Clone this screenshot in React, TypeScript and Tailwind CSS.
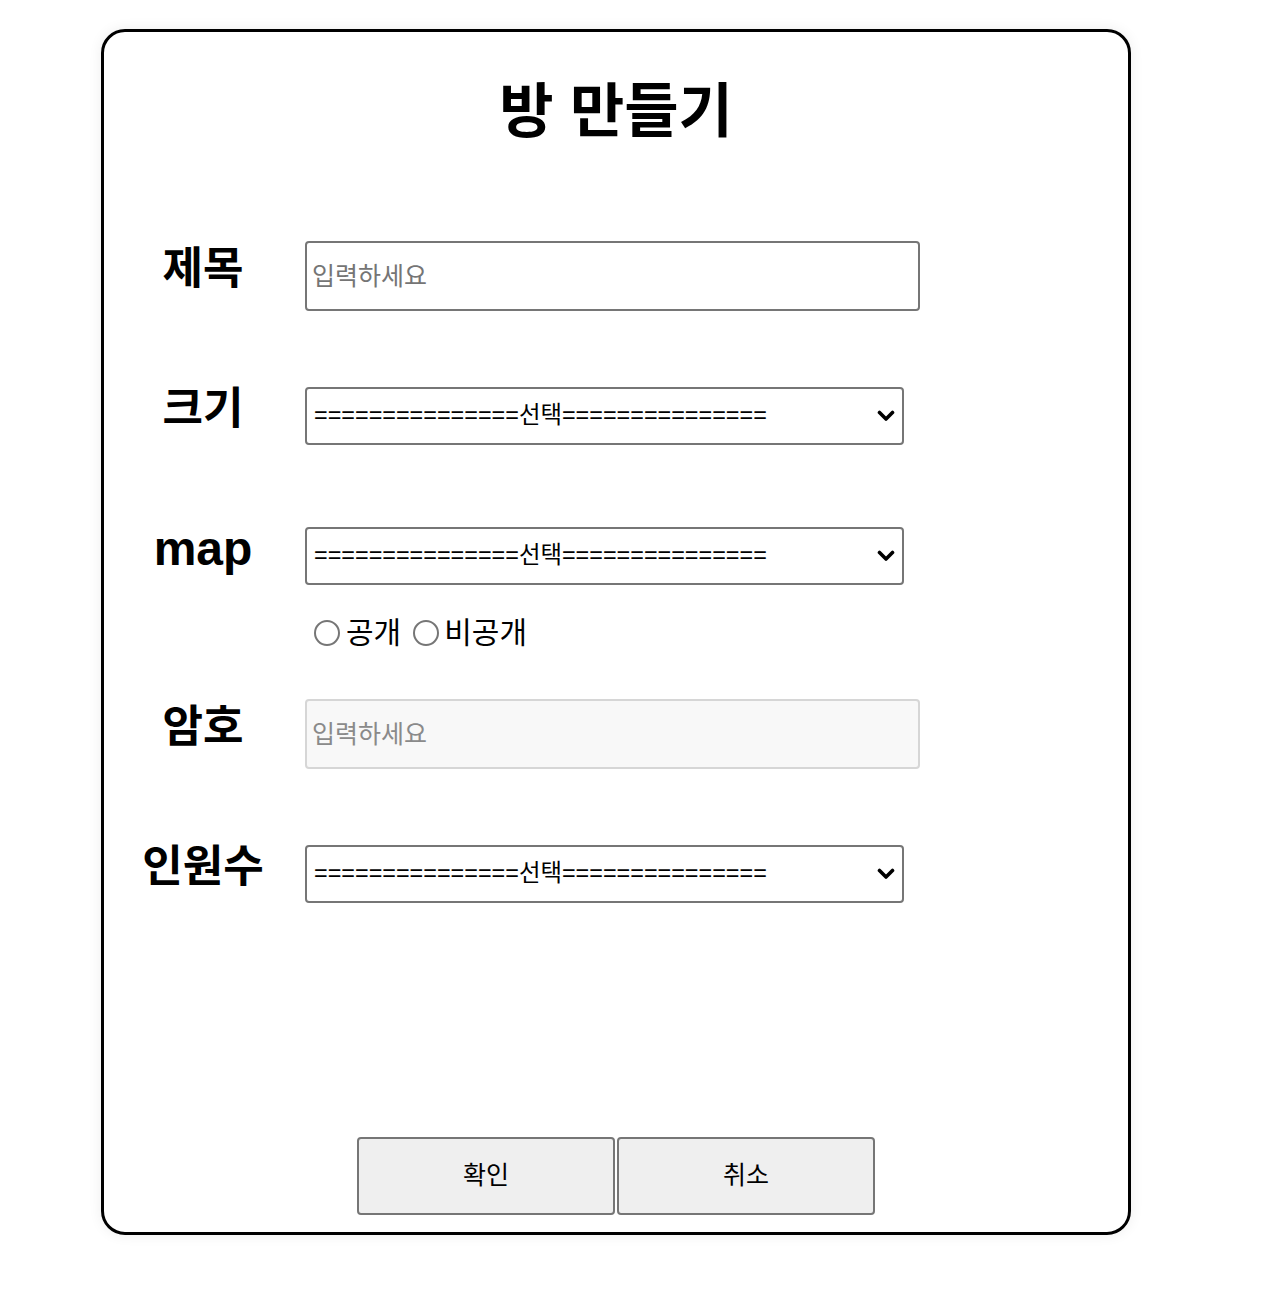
import { useState } from "react";

const font = { fontFamily: '"Liberation Sans", "Noto Sans CJK KR", sans-serif' };

const options = "===============선택===============";

function Label({ children, big }: { children: string; big?: boolean }) {
  return (
    <div
      className={
        "w-[198px] shrink-0 text-center font-bold text-black -mt-[14px] leading-none " +
        (big ? "text-[48px]" : "text-[44px]")
      }
    >
      {children}
    </div>
  );
}

function Select() {
  return (
    <div className="relative w-[599px] h-[58px]">
      <select
        className="w-full h-full appearance-none rounded-[4px] border-2 border-[#767676] bg-white pl-[7px] text-[23.4px] text-black outline-none"
        style={font}
        defaultValue=""
      >
        <option value="">{options}</option>
      </select>
      <svg
        className="pointer-events-none absolute right-[9px] top-[23px]"
        width="18"
        height="12"
        viewBox="0 0 18 12"
        fill="none"
      >
        <path d="M2.5 2.5 L9 9 L15.5 2.5" stroke="#000" strokeWidth="3.6" strokeLinecap="round" strokeLinejoin="round" />
      </svg>
    </div>
  );
}

export default function App() {
  const [open, setOpen] = useState<string>("");

  return (
    <div className="min-h-[1312px] bg-white pt-[29px] pl-[101px]" style={font}>
      <div className="w-[1030px] h-[1206px] border-[3px] border-black rounded-[24px] shadow-[0_0_14px_rgba(0,0,0,0.07)] flex flex-col">
        <h1 className="mt-[44px] text-center text-[59px] font-bold leading-[72px] text-black">방 만들기</h1>

        <div className="mt-[93px] flex items-center gap-[3px]">
          <Label>제목</Label>
          <input
            className="w-[615px] h-[70px] rounded-[4px] border-2 border-[#767676] px-[5px] text-[25px] outline-none placeholder:text-[#757575]"
            style={font}
            placeholder="입력하세요"
          />
        </div>

        <div className="mt-[76px] flex items-center gap-[3px]">
          <Label>크기</Label>
          <Select />
        </div>

        <div className="mt-[82px] flex items-center gap-[3px]">
          <Label big>map</Label>
          <Select />
        </div>

        <div className="mt-[35px] ml-[210px] flex items-center h-[26px] text-[30px] text-black">
          <label className="flex items-center">
            <input
              type="radio"
              name="open"
              checked={open === "public"}
              onChange={() => setOpen("public")}
              className="appearance-none w-[26px] h-[26px] rounded-full border-2 border-[#767676] bg-white"
            />
            <span className="ml-[6px] leading-none">공개</span>
          </label>
          <label className="ml-[12px] flex items-center">
            <input
              type="radio"
              name="open"
              checked={open === "private"}
              onChange={() => setOpen("private")}
              className="appearance-none w-[26px] h-[26px] rounded-full border-2 border-[#767676] bg-white"
            />
            <span className="ml-[5px] leading-none">비공개</span>
          </label>
        </div>

        <div className="mt-[53px] flex items-center gap-[3px]">
          <Label>암호</Label>
          <input
            disabled
            className="w-[615px] h-[70px] rounded-[4px] border-2 border-[#d6d6d6] bg-[#f8f8f8] px-[5px] text-[25px] outline-none placeholder:text-[#8a8a8a]"
            style={font}
            placeholder="입력하세요"
          />
        </div>

        <div className="mt-[76px] flex items-center gap-[3px]">
          <Label>인원수</Label>
          <Select />
        </div>

        <div className="mt-auto mb-[17px] flex justify-center gap-[2px]">
          <button className="w-[258px] h-[78px] rounded-[4px] border-2 border-[#767676] bg-[#efefef] text-[25px] text-black">
            확인
          </button>
          <button className="w-[258px] h-[78px] rounded-[4px] border-2 border-[#767676] bg-[#efefef] text-[25px] text-black">
            취소
          </button>
        </div>
      </div>
    </div>
  );
}
